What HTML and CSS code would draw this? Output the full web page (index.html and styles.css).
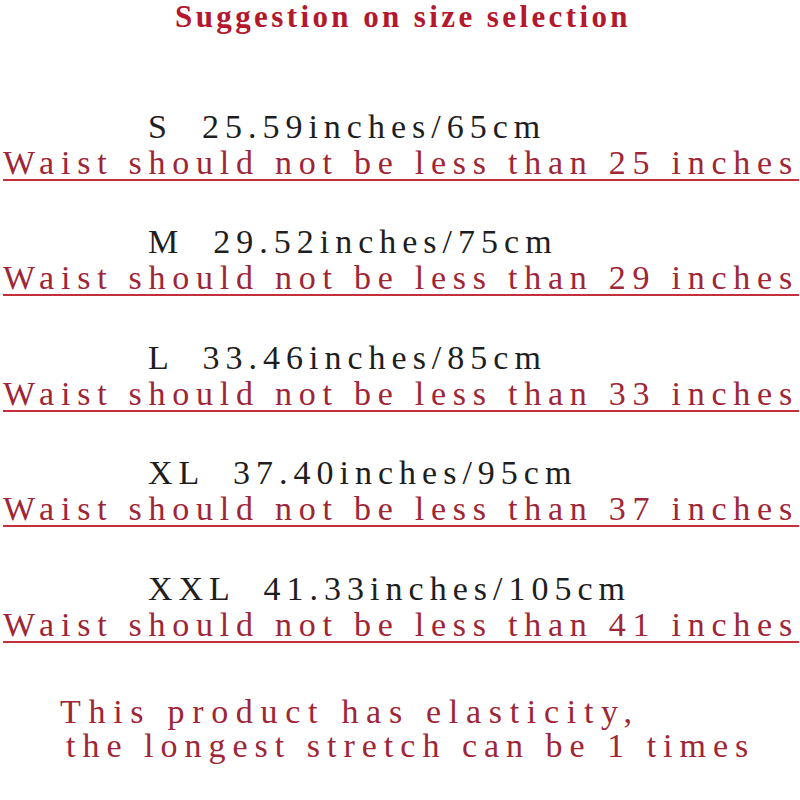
FILE: index.html
```html
<!DOCTYPE html>
<html lang="en">
<head>
<meta charset="utf-8">
<title>Suggestion on size selection</title>
<link rel="stylesheet" href="styles.css">
</head>
<body>
<main class="page">
  <h1 class="title">Suggestion on size selection</h1>
  <section class="sizes">
    <div class="size">
      <p class="size-value">S  25.59inches/65cm</p>
      <p class="size-note">Waist should not be less than 25 inches</p>
    </div>
    <div class="size">
      <p class="size-value">M  29.52inches/75cm</p>
      <p class="size-note">Waist should not be less than 29 inches</p>
    </div>
    <div class="size">
      <p class="size-value">L  33.46inches/85cm</p>
      <p class="size-note">Waist should not be less than 33 inches</p>
    </div>
    <div class="size">
      <p class="size-value">XL  37.40inches/95cm</p>
      <p class="size-note">Waist should not be less than 37 inches</p>
    </div>
    <div class="size">
      <p class="size-value">XXL  41.33inches/105cm</p>
      <p class="size-note">Waist should not be less than 41 inches</p>
    </div>
  </section>
  <section class="footnote">
    <p class="footnote-line">This product has elasticity,</p>
    <p class="footnote-line footnote-line--second">the longest stretch can be 1 times</p>
  </section>
</main>
</body>
</html>
```

FILE: styles.css
```css
html, body {
  margin: 0;
  padding: 0;
  background: #ffffff;
}

.page {
  width: 800px;
  height: 800px;
  overflow: hidden;
  font-family: "Liberation Serif", "Times New Roman", serif;
}

.title {
  margin: 0;
  font-size: 31px;
  line-height: 34px;
  font-weight: bold;
  letter-spacing: 3.4px;
  color: #b3182d;
  text-align: center;
  padding-left: 6px;
}

.sizes {
  display: flex;
  flex-direction: column;
  gap: 43.5px;
  margin-top: 74.5px;
}

.size p {
  margin: 0;
  font-size: 34px;
  line-height: 36px;
  white-space: pre;
}

.size-value {
  padding-left: 148px;
  color: #1e1e1e;
  letter-spacing: 6px;
}

.size-note {
  padding-left: 3px;
  color: #9e2637;
  letter-spacing: 6.75px;
  text-decoration: underline;
  text-decoration-color: #c3303c;
  text-decoration-thickness: 2px;
  text-underline-offset: 5px;
}

.footnote {
  margin-top: 52px;
}

.footnote-line {
  margin: 0;
  font-size: 34px;
  line-height: 34px;
  letter-spacing: 7.7px;
  color: #9e2637;
  padding-left: 60px;
  white-space: pre;
}

.footnote-line--second {
  padding-left: 66px;
  letter-spacing: 7px;
}
```
